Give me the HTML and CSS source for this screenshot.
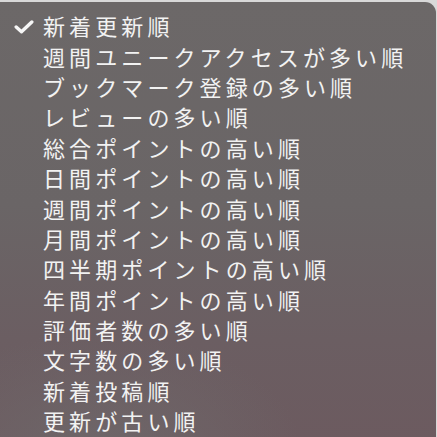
FILE: index.html
```html
<!DOCTYPE html>
<html lang="ja">
<head>
<meta charset="utf-8">
<link rel="stylesheet" href="styles.css">
</head>
<body>
<div class="menu">
  <ul class="list">
    <li class="item checked"><svg class="check" viewBox="0 0 20 14" width="20" height="14"><path d="M2.2 7 L7.5 11.8 L17.8 2" fill="none" stroke="#f6f6f6" stroke-width="3.4" stroke-linecap="round" stroke-linejoin="round"/></svg><span>新着更新順</span></li>
    <li class="item"><span>週間ユニークアクセスが多い順</span></li>
    <li class="item"><span>ブックマーク登録の多い順</span></li>
    <li class="item"><span>レビューの多い順</span></li>
    <li class="item"><span>総合ポイントの高い順</span></li>
    <li class="item"><span>日間ポイントの高い順</span></li>
    <li class="item"><span>週間ポイントの高い順</span></li>
    <li class="item"><span>月間ポイントの高い順</span></li>
    <li class="item"><span>四半期ポイントの高い順</span></li>
    <li class="item"><span>年間ポイントの高い順</span></li>
    <li class="item"><span>評価者数の多い順</span></li>
    <li class="item"><span>文字数の多い順</span></li>
    <li class="item"><span>新着投稿順</span></li>
    <li class="item"><span>更新が古い順</span></li>
  </ul>
</div>
</body>
</html>
```
FILE: styles.css
```css
html, body {
  margin: 0;
  padding: 0;
  width: 437px;
  height: 437px;
  overflow: hidden;
  background: #d9d9d9;
}
.menu {
  margin: 2px 0 0 -10px;
  width: 446px;
  height: 450px;
  border-top-right-radius: 11px;
  background:
    radial-gradient(ellipse 200px 120px at 25% 100%, rgba(110,104,106,0.9), rgba(110,104,106,0) 100%),
    linear-gradient(to bottom, #6c6868 0%, #6a6566 45%, #6b5e62 75%, #6c5a5f 100%);
  font-family: "Noto Sans CJK JP", "Noto Sans", sans-serif;
  color: #f2f2f2;
  box-sizing: border-box;
  padding-top: 8px;
}
.list {
  list-style: none;
  margin: 0;
  padding: 0;
}
.item {
  display: flex;
  align-items: center;
  height: 30.4px;
  padding-left: 53px;
  position: relative;
  font-size: 22px;
  font-weight: 400;
  letter-spacing: 4.1px;
  white-space: nowrap;
  line-height: 1;
}
.check {
  position: absolute;
  left: 24px;
  top: 10px;
}
```
